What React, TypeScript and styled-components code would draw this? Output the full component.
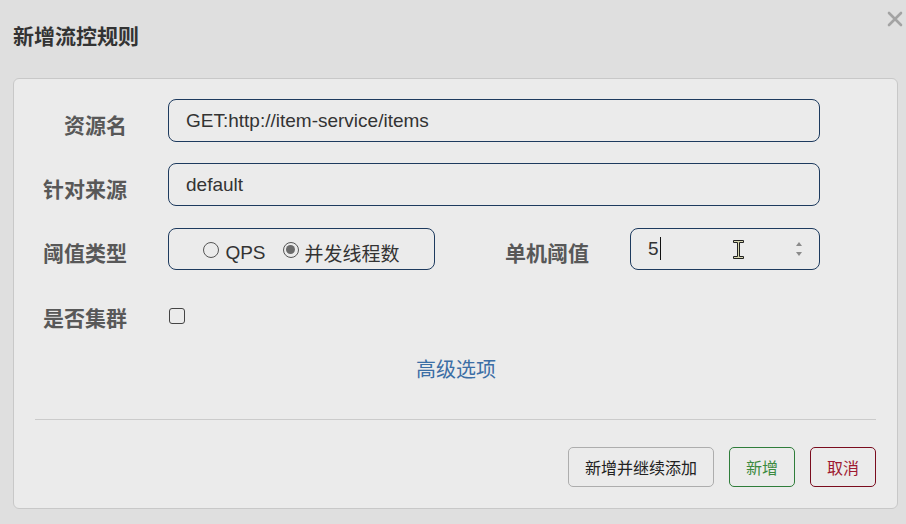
import React from 'react';
import styled, { createGlobalStyle } from 'styled-components';

const GlobalStyle = createGlobalStyle`
  html, body {
    margin: 0;
    padding: 0;
    background: #dfdfdf;
    font-family: "Liberation Sans", "Noto Sans CJK SC", sans-serif;
  }
  * { box-sizing: border-box; }
`;

const Page = styled.div`
  width: 906px;
  height: 524px;
  display: flex;
  flex-direction: column;
  background: #dfdfdf;
`;

const Header = styled.div`
  height: 78px;
  display: flex;
  justify-content: space-between;
  padding: 0 3px 0 13px;
`;

const Title = styled.h2`
  margin: 0;
  height: 70px;
  display: flex;
  align-items: center;
  font-size: 21px;
  font-weight: 700;
  color: #333;
  font-family: "Noto Sans CJK SC", sans-serif;
`;

const Close = styled.button`
  margin-top: 11px;
  width: 16px;
  height: 16px;
  padding: 0;
  border: 0;
  background: none;
  display: flex;
`;

const Panel = styled.div`
  width: 885px;
  height: 431px;
  margin-left: 13px;
  background: #ebebeb;
  border: 1px solid #c8c8c8;
  border-radius: 6px;
  display: flex;
  flex-direction: column;
`;

const Form = styled.div`
  padding-top: 20px;
  display: flex;
  flex-direction: column;
`;

const Row = styled.div<{ $gap?: number }>`
  height: 43px;
  margin-top: ${p => p.$gap ?? 0}px;
  display: flex;
  align-items: center;
  gap: 41px;
`;

const Label = styled.label<{ $drop?: number }>`
  width: 113px;
  margin-top: ${p => p.$drop ?? 7}px;
  text-align: right;
  font-size: 21px;
  font-weight: 700;
  color: #585858;
  font-family: "Noto Sans CJK SC", sans-serif;
  flex-shrink: 0;
`;

const TextInput = styled.input`
  width: 652px;
  height: 43px;
  border: 1px solid #1d3a5e;
  border-radius: 8px;
  background: #ebebeb;
  padding: 0 17px;
  font-family: "Liberation Sans", "Noto Sans CJK SC", sans-serif;
  font-size: 19px;
  color: #333;
  outline: none;
`;

const RadioBox = styled.div`
  width: 267px;
  height: 42px;
  border: 1px solid #1d3a5e;
  border-radius: 8px;
  padding-top: 8px;
  display: flex;
  align-items: center;
  justify-content: center;
  gap: 17px;
`;

const RadioItem = styled.span`
  display: flex;
  align-items: center;
  gap: 6px;
  font-size: 19px;
  color: #333;
`;

const RadioDot = styled.span<{ $checked?: boolean }>`
  width: 16px;
  height: 16px;
  border-radius: 50%;
  border: 1.5px solid #555;
  display: flex;
  align-items: center;
  justify-content: center;
  margin-top: -6px;
  &::after {
    content: '';
    width: 9px;
    height: 9px;
    border-radius: 50%;
    background: ${p => (p.$checked ? '#6b6b6b' : 'transparent')};
  }
`;

const NumberField = styled.div`
  width: 190px;
  height: 42px;
  border: 1px solid #1d3a5e;
  border-radius: 8px;
  padding: 0 17px 0 17px;
  display: flex;
  align-items: center;
  font-size: 19px;
  color: #333;
`;

const Value = styled.span`
  display: flex;
  align-items: center;
`;

const Caret = styled.span`
  width: 1px;
  height: 23px;
  background: #111;
  margin-left: 1px;
`;

const Cursor = styled.svg`
  margin-left: 72px;
  margin-top: 2px;
`;

const Spinner = styled.svg`
  margin-left: auto;
  margin-right: -1px;
`;

const CheckBox = styled.span`
  width: 16px;
  height: 16px;
  border: 1.5px solid #444;
  border-radius: 3px;
  margin-left: 1px;
  margin-top: -2px;
`;

const Advanced = styled.a`
  margin-top: 18px;
  height: 26px;
  align-self: center;
  margin-left: 1px;
  font-size: 20px;
  color: #3b6ea5;
  text-decoration: none;
  font-family: "Noto Sans CJK SC", sans-serif;
  line-height: 26px;
`;

const Divider = styled.hr`
  margin: 37px 21px 0 21px;
  border: 0;
  border-top: 1px solid #cbcbcb;
  height: 0;
`;

const Footer = styled.div`
  padding: 27px 21px 0 0;
  display: flex;
  justify-content: flex-end;
  gap: 15px;
`;

const Button = styled.button<{ $tone?: 'default' | 'ok' | 'cancel' }>`
  height: 40px;
  padding: 0 16px;
  border-radius: 5px;
  background: #ebebeb;
  font-family: "Noto Sans CJK SC", sans-serif;
  font-size: 16px;
  border: 1px solid
    ${p => (p.$tone === 'ok' ? '#2f7d3a' : p.$tone === 'cancel' ? '#7a0c1e' : '#adadad')};
  color: ${p => (p.$tone === 'ok' ? '#3b8a3f' : p.$tone === 'cancel' ? '#9e1830' : '#222')};
  min-width: 66px;
`;

export default function App() {
  return (
    <>
      <GlobalStyle />
      <Page>
        <Header>
          <Title>新增流控规则</Title>
          <Close aria-label="close">
            <svg width="16" height="16" viewBox="0 0 16 16">
              <path d="M2 2 L14 14 M14 2 L2 14" stroke="#a3a3a3" strokeWidth="2.6" strokeLinecap="round" />
            </svg>
          </Close>
        </Header>
        <Panel>
          <Form>
            <Row>
              <Label>资源名</Label>
              <TextInput readOnly defaultValue="GET:http://item-service/items" />
            </Row>
            <Row $gap={21}>
              <Label>针对来源</Label>
              <TextInput readOnly defaultValue="default" />
            </Row>
            <Row $gap={21}>
              <Label>阈值类型</Label>
              <RadioBox>
                <RadioItem>
                  <RadioDot />
                  QPS
                </RadioItem>
                <RadioItem>
                  <RadioDot $checked />
                  并发线程数
                </RadioItem>
              </RadioBox>
              <Label>单机阈值</Label>
              <NumberField>
                <Value>
                  5<Caret />
                </Value>
                <Cursor width="11" height="19" viewBox="0 0 11 19">
                  <path
                    d="M0.5 0.5 H10.5 V2.5 H6.5 V16.5 H10.5 V18.5 H0.5 V16.5 H4.5 V2.5 H0.5 Z"
                    fill="#d8d8b0"
                    stroke="#222"
                    strokeWidth="1"
                  />
                </Cursor>
                <Spinner width="8" height="18" viewBox="0 0 8 18">
                  <path d="M4 2 L7 6 H1 Z" fill="#8a8a8a" />
                  <path d="M4 16 L7 12 H1 Z" fill="#8a8a8a" />
                </Spinner>
              </NumberField>
            </Row>
            <Row $gap={25}>
              <Label $drop={1}>是否集群</Label>
              <CheckBox />
            </Row>
            <Advanced href="#">高级选项</Advanced>
          </Form>
          <Divider />
          <Footer>
            <Button>新增并继续添加</Button>
            <Button $tone="ok">新增</Button>
            <Button $tone="cancel">取消</Button>
          </Footer>
        </Panel>
      </Page>
    </>
  );
}
